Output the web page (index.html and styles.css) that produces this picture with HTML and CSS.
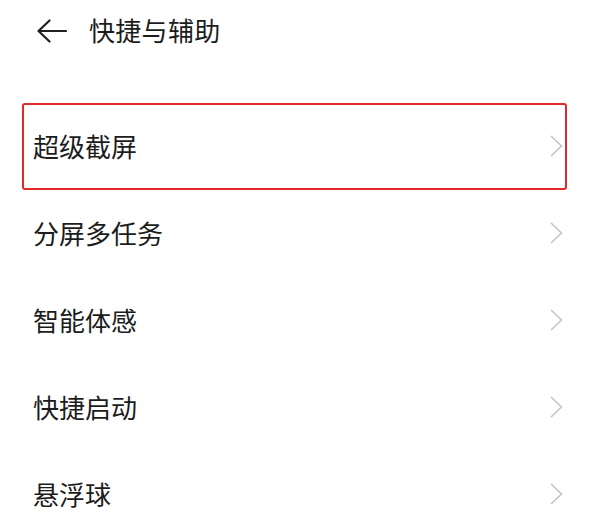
FILE: index.html
```html
<!DOCTYPE html>
<html lang="zh-CN">
<head>
<meta charset="utf-8">
<link rel="stylesheet" href="styles.css">
</head>
<body>
<div class="page">
  <header class="header">
    <svg class="back" width="30" height="24" viewBox="0 0 30 24">
      <path d="M1.5 12 H29 M12.5 1.5 L1.5 12 L12.5 22.5" fill="none" stroke="#1f1f1f" stroke-width="2.2" stroke-linecap="round" stroke-linejoin="round"/>
    </svg>
    <h1 class="title">快捷与辅助</h1>
  </header>
  <ul class="list">
    <li class="row row-marked"><span class="label">超级截屏</span><svg class="chev" width="13" height="22" viewBox="0 0 13 22"><path d="M1 1 L11.5 11 L1 21" fill="none" stroke="#c4c4c4" stroke-width="1.6"/></svg></li>
    <li class="row"><span class="label">分屏多任务</span><svg class="chev" width="13" height="22" viewBox="0 0 13 22"><path d="M1 1 L11.5 11 L1 21" fill="none" stroke="#c4c4c4" stroke-width="1.6"/></svg></li>
    <li class="row"><span class="label">智能体感</span><svg class="chev" width="13" height="22" viewBox="0 0 13 22"><path d="M1 1 L11.5 11 L1 21" fill="none" stroke="#c4c4c4" stroke-width="1.6"/></svg></li>
    <li class="row"><span class="label">快捷启动</span><svg class="chev" width="13" height="22" viewBox="0 0 13 22"><path d="M1 1 L11.5 11 L1 21" fill="none" stroke="#c4c4c4" stroke-width="1.6"/></svg></li>
    <li class="row"><span class="label">悬浮球</span><svg class="chev" width="13" height="22" viewBox="0 0 13 22"><path d="M1 1 L11.5 11 L1 21" fill="none" stroke="#c4c4c4" stroke-width="1.6"/></svg></li>
  </ul>
</div>
</body>
</html>
```

FILE: styles.css
```css
html, body {
  margin: 0;
  padding: 0;
  background: #ffffff;
}
body {
  font-family: "Noto Sans CJK SC", "Noto Sans", sans-serif;
  color: #1c1c1c;
}
.page {
  width: 589px;
  height: 526px;
  overflow: hidden;
}
.header {
  height: 59px;
  display: flex;
  align-items: center;
  padding-left: 37px;
  gap: 22px;
}
.back {
  display: block;
  flex: none;
  margin-top: 3px;
}
.title {
  margin: 0;
  font-size: 26px;
  font-weight: 400;
  line-height: 1;
  letter-spacing: 0.3px;
}
.list {
  list-style: none;
  margin: 43px 0 0 0;
  padding: 0 22px;
}
.row {
  position: relative;
  height: 87px;
  display: flex;
  align-items: center;
  justify-content: space-between;
  padding: 0 4px 0 11px;
}
.label {
  font-size: 26px;
  line-height: 1;
  font-weight: 400;
}
.chev {
  display: block;
  flex: none;
}
.row-marked::after {
  content: "";
  position: absolute;
  left: 0;
  right: 0;
  top: 1px;
  bottom: -1px;
  border: 2px solid #e0292b;
  border-radius: 3px;
  pointer-events: none;
}
```
